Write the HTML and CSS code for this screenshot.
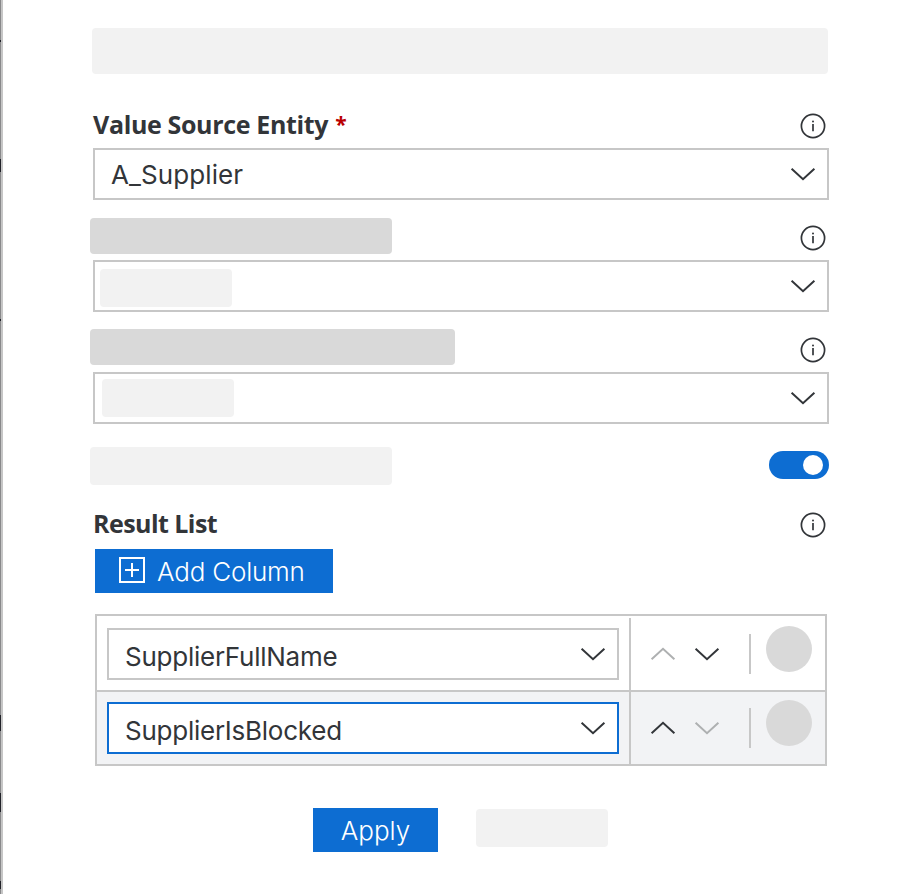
FILE: index.html
```html
<!DOCTYPE html>
<html lang="en">
<head>
<meta charset="utf-8">
<title>Value Source Entity</title>
<link rel="stylesheet" href="styles.css">
</head>
<body>
<svg class="defs" width="0" height="0" aria-hidden="true">
  <symbol id="info" viewBox="0 0 26 26"><circle cx="13" cy="13" r="11.6" fill="none" stroke="currentColor" stroke-width="1.7"/><path d="M13 11v7.3" stroke="currentColor" stroke-width="1.7"/><circle cx="13" cy="8.6" r="1" fill="currentColor"/></symbol>
  <symbol id="down" viewBox="0 0 26 14"><path d="M1.6 1.8 13 12.2 24.4 1.8" fill="none" stroke="currentColor" stroke-width="2"/></symbol>
  <symbol id="up" viewBox="0 0 26 14"><path d="M1.6 12.2 13 1.8 24.4 12.2" fill="none" stroke="currentColor" stroke-width="2"/></symbol>
</svg>
<div class="page">
  <div class="edge"><i class="mark m1"></i><i class="mark m2"></i><i class="mark m3"></i><i class="mark m4"></i><i class="mark m5"></i><i class="mark m6"></i></div>
  <main class="panel">
    <div class="skeleton title"></div>

    <div class="label-row first">
      <label class="label"><span class="t-value">Value Source Entity</span><span class="required">*</span></label>
      <svg class="info"><use href="#info"/></svg>
    </div>
    <div class="select"><span class="value t-supplier">A_Supplier</span><svg class="chevron"><use href="#down"/></svg></div>

    <div class="label-row">
      <div class="skeleton dark short"></div>
      <svg class="info"><use href="#info"/></svg>
    </div>
    <div class="select"><div class="skeleton entry"></div><svg class="chevron"><use href="#down"/></svg></div>

    <div class="label-row">
      <div class="skeleton dark long"></div>
      <svg class="info"><use href="#info"/></svg>
    </div>
    <div class="select"><div class="skeleton entry offset"></div><svg class="chevron"><use href="#down"/></svg></div>

    <div class="toggle-row">
      <div class="skeleton toggle-label"></div>
      <div class="toggle"><i class="knob"></i></div>
    </div>

    <div class="label-row result">
      <h2 class="label"><span class="t-result">Result List</span></h2>
      <svg class="info"><use href="#info"/></svg>
    </div>
    <button class="button add"><svg class="plus" viewBox="0 0 26 26"><path d="M1 1h24v24H1zM13 6v14M6 13h14" fill="none" stroke="currentColor" stroke-width="2"/></svg><span class="t-add">Add Column</span></button>

    <div class="table">
      <div class="row">
        <div class="cell"><div class="select"><span class="value t-full">SupplierFullName</span><svg class="chevron"><use href="#down"/></svg></div></div>
        <div class="actions"><svg class="chevron muted"><use href="#up"/></svg><svg class="chevron"><use href="#down"/></svg><i class="separator"></i><i class="dot"></i></div>
      </div>
      <div class="row selected">
        <div class="cell"><div class="select active"><span class="value t-blocked">SupplierIsBlocked</span><svg class="chevron"><use href="#down"/></svg></div></div>
        <div class="actions"><svg class="chevron"><use href="#up"/></svg><svg class="chevron muted"><use href="#down"/></svg><i class="separator"></i><i class="dot"></i></div>
      </div>
    </div>

    <div class="footer">
      <button class="button apply"><span class="t-apply">Apply</span></button>
      <div class="skeleton cancel"></div>
    </div>
  </main>
</div>
</body>
</html>
```
FILE: styles.css
```css
* { box-sizing: border-box; }
body { margin: 0; background: #fff; color: #323539; font-family: Inter, "Liberation Sans", sans-serif; font-size: 26px; }
.defs { position: absolute; }
.page { display: flex; height: 894px; overflow: hidden; }
.edge { position: relative; width: 3px; flex: none; border-left: 1px solid #88888a; background: #c6c6c6; }
.mark { position: absolute; left: -1px; width: 1px; background: #202128; }
.m1 { top: 40px; height: 2px; }
.m2 { top: 159px; height: 13px; }
.m3 { top: 319px; height: 2px; }
.m4 { top: 715px; height: 16px; }
.m5 { top: 793px; height: 19px; }
.m6 { top: 881px; height: 8px; }
.panel { width: 736px; margin-left: 90px; padding-top: 28px; }

.skeleton { background: #f2f2f2; border-radius: 4px; }
.skeleton.dark { background: #d9d9d9; }
.title { height: 46px; margin: 0 1px 0 -1px; }
.short { width: 302px; height: 36px; margin: 18px 0 0 -3px; }
.long { width: 365px; height: 36px; margin: 17px 0 0 -3px; }
.entry { width: 132px; height: 38px; margin: 4px 0 0 -11px; }
.entry.offset { margin: 0 0 0 -9px; }

.label-row { display: flex; justify-content: space-between; align-items: flex-start; height: 60px; }
.label-row.first { height: 60px; margin-top: 14px; }
.label-row.result { height: 48px; margin-top: 16px; }
.label { margin: 17px 0 0; font: 700 25px/38px "Open Sans", "Noto Sans", sans-serif; letter-spacing: -0.35px; white-space: nowrap; }
.result .label { margin-top: 3px; letter-spacing: -0.55px; }
.required { color: #b90000; margin-left: 7px; font-size: 21px; line-height: 1; vertical-align: 2px; }
.info { width: 26px; height: 26px; margin: 25px 3px 0 0; flex: none; }
.result .info { margin-top: 11px; }

.select { display: flex; align-items: center; justify-content: space-between; height: 52px; border: 2px solid #c7c7c7; background: #fff; padding: 0 11px 0 16px; }
.select.active { border-color: #0d6dd2; }
.value { white-space: nowrap; line-height: 32px; }
.t-supplier { margin-top: 2px; letter-spacing: 0.1px; }
.t-full, .t-blocked { letter-spacing: -0.25px; }
.chevron { width: 26px; height: 14px; flex: none; }
.muted { color: #aeb0b1; }

.toggle-row { display: flex; justify-content: space-between; height: 38px; margin-top: 23px; }
.toggle-label { width: 302px; height: 38px; margin-left: -3px; }
.toggle { display: flex; align-items: center; justify-content: flex-end; width: 60px; height: 28px; margin-top: 4px; padding-right: 6px; border-radius: 14px; background: #0d6dd2; }
.knob { width: 20px; height: 20px; border-radius: 50%; background: #fff; }

.button { display: flex; align-items: center; height: 44px; padding: 0; border: 0; background: #0d6dd2; color: #fff; font: 300 26px/32px Inter, "Liberation Sans", sans-serif; white-space: nowrap; }
.add { width: 238px; margin-left: 2px; padding-left: 24px; gap: 12px; }
.plus { width: 26px; height: 26px; margin-bottom: 2px; }
.t-add, .t-apply { margin-top: 2px; }
.t-add { letter-spacing: -0.2px; }

.table { width: 732px; margin: 21px 0 0 2px; border: 2px solid #c7c7c7; }
.row { display: flex; height: 74px; }
.row.selected { height: 74px; border-top: 2px solid #c7c7c7; background: #f2f3f5; }
.cell { width: 532px; padding: 12px 10px 0; }
.selected .cell { padding-top: 10px; }
.cell .value { margin-top: 6px; }
.actions { display: flex; align-items: center; flex: 1; margin-top: 2px; border-left: 2px solid #c7c7c7; padding: 0 13px 8px 19px; }
.selected .actions { margin-top: 0; }
.actions .chevron + .chevron { margin-left: 18px; }
.actions .chevron { margin-top: 8px; }
.separator { width: 2px; height: 40px; margin: 8px 0 0 29px; background: #c7c7c7; }
.dot { width: 46px; height: 46px; margin: -2px 0 0 15px; border-radius: 50%; background: #d9d9d9; flex: none; }

.footer { display: flex; margin: 42px 0 0 220px; }
.apply { width: 125px; justify-content: center; }
.cancel { width: 132px; height: 38px; margin: 1px 0 0 38px; }
```
